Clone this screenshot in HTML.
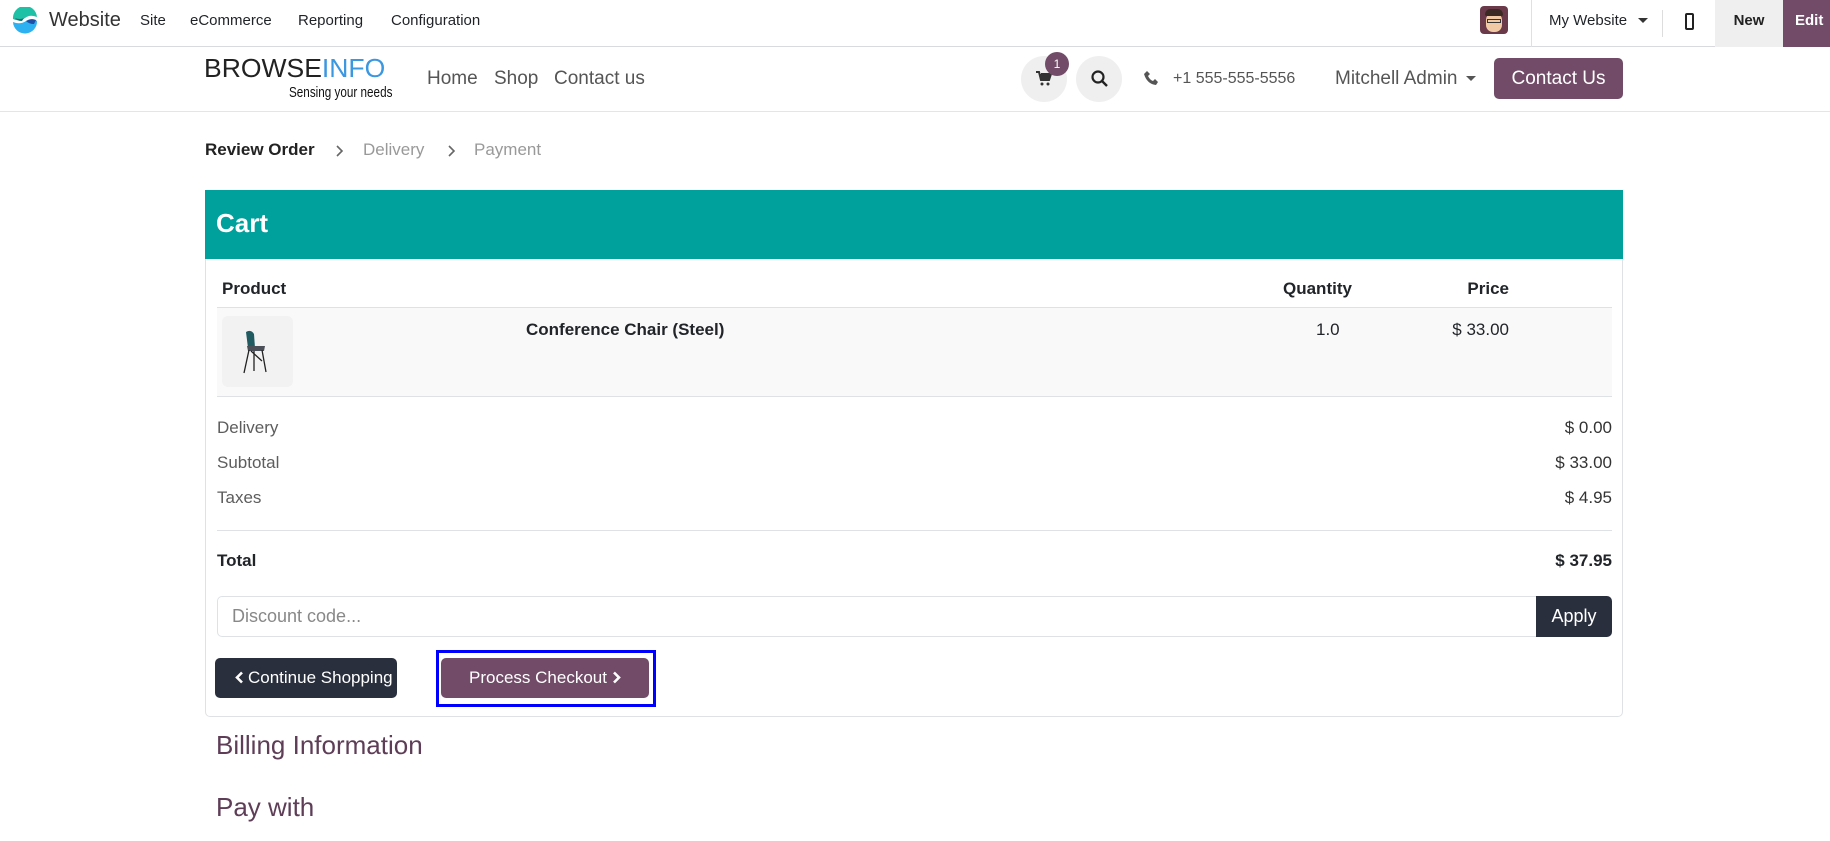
<!DOCTYPE html>
<html><head><meta charset="utf-8"><style>
*{box-sizing:border-box;margin:0;padding:0}
body{width:1830px;height:841px;overflow:hidden;background:#fff;font-family:"Liberation Sans",sans-serif;color:#212529;position:relative}
.a{position:absolute;white-space:nowrap}
.top{position:absolute;left:0;top:0;width:1830px;height:47px;border-bottom:1px solid #d8dadd;background:#fff}
.nav{position:absolute;left:0;top:47px;width:1830px;height:65px;border-bottom:1px solid #e5e5e5;background:#fff}
.m{font-size:15px;color:#1f2328;top:12px}
.n{font-size:19px;color:#555;top:68px}
.r{font-size:17px;color:#5d5d5d}
.v{font-size:17px;color:#333;right:218px}
</style></head><body>
<div class="top"></div>
<svg class="a" style="left:12px;top:7px" width="26" height="28" viewBox="0 0 26 28"><path d="M1 12 A12 12 0 0 1 25 10 Q18 7 13 11 Q7 15 1 12Z" fill="#1fc1a6"/><path d="M1 15 Q8 18 14 14 Q20 10 25 14 A12 12 0 0 1 1 15Z" fill="#2eb1f0"/><path d="M3 11 Q8 13 12 11 L10 14 Q5 14 3 11Z" fill="#1b6d73"/><path d="M14 14 Q19 11 24 13 L22 17 Q17 17 14 14Z" fill="#1e4fa4"/></svg>
<div class="a" style="left:49px;top:9px;font-size:20px;color:#333">Website</div>
<div class="a m" style="left:140px">Site</div>
<div class="a m" style="left:190px">eCommerce</div>
<div class="a m" style="left:298px">Reporting</div>
<div class="a m" style="left:391px">Configuration</div>
<div class="a" style="left:1480px;top:6px;width:28px;height:28px;border-radius:4px;background:#6b3a4a;overflow:hidden"><div style="position:absolute;left:6px;top:7px;width:16px;height:19px;border-radius:7px;background:#f1c9a5"></div><div style="position:absolute;left:5px;top:3px;width:18px;height:7px;border-radius:6px 6px 2px 2px;background:#3b2a24"></div><div style="position:absolute;left:7px;top:13px;width:14px;height:4px;border:1px solid #333"></div></div>
<div class="a" style="left:1531px;top:0;width:1px;height:47px;background:#e0e0e0"></div>
<div class="a m" style="left:1549px">My Website</div>
<div class="a" style="left:1638px;top:18px;border-left:5px solid transparent;border-right:5px solid transparent;border-top:5px solid #333"></div>
<div class="a" style="left:1662px;top:10px;width:1px;height:27px;background:#ddd"></div>
<div class="a" style="left:1685px;top:13px;width:9px;height:17px;border:2px solid #222;border-radius:2px"></div>
<div class="a" style="left:1715px;top:0;width:68px;height:47px;background:#efefef;font-size:15px;font-weight:bold;color:#222;text-align:center;line-height:42px">New</div>
<div class="a" style="left:1783px;top:0;width:47px;height:47px;background:#714b67;font-size:15px;font-weight:bold;color:#fff;line-height:42px;padding-left:12px">Edit</div>

<div class="nav"></div>
<div class="a" style="left:204px;top:53px;font-size:26px;color:#222;transform:scaleX(1.02);transform-origin:left">BROWSE<span style="color:#3a97e0">INFO</span></div>
<div class="a" style="left:289px;top:84px;font-size:15px;color:#111;transform:scaleX(.78);transform-origin:left">Sensing your needs</div>
<div class="a n" style="left:427px">Home</div>
<div class="a n" style="left:494px">Shop</div>
<div class="a n" style="left:554px">Contact us</div>
<div class="a" style="left:1021px;top:56px;width:46px;height:46px;border-radius:50%;background:#efefef"></div>
<svg class="a" style="left:1036px;top:71px" width="16" height="15" viewBox="0 0 16 15"><path d="M0 1h3l2 8h8l2-6H5" fill="none" stroke="#333" stroke-width="2"/><rect x="4" y="3" width="10" height="6" fill="#333"/><circle cx="6" cy="13" r="1.5" fill="#333"/><circle cx="12" cy="13" r="1.5" fill="#333"/></svg>
<div class="a" style="left:1045px;top:52px;width:24px;height:24px;border-radius:50%;background:#714b67;color:#fff;font-size:12px;text-align:center;line-height:24px">1</div>
<div class="a" style="left:1076px;top:56px;width:46px;height:46px;border-radius:50%;background:#efefef"></div>
<svg class="a" style="left:1091px;top:70px" width="17" height="17" viewBox="0 0 17 17"><circle cx="7" cy="7" r="5.5" fill="none" stroke="#222" stroke-width="2.2"/><path d="M11 11l5 5" stroke="#222" stroke-width="2.4"/></svg>
<svg class="a" style="left:1144px;top:71px" width="14" height="14" viewBox="0 0 14 14"><path d="M3 0l3 3-2 2q2 4 5 5l2-2 3 3-2 3Q3 13 0 3z" fill="#555"/></svg>
<div class="a" style="left:1173px;top:70px;font-size:16px;color:#555">+1 555-555-5556</div>
<div class="a n" style="left:1335px;top:68px">Mitchell Admin</div>
<div class="a" style="left:1466px;top:76px;border-left:5px solid transparent;border-right:5px solid transparent;border-top:5px solid #555"></div>
<div class="a" style="left:1494px;top:58px;width:129px;height:41px;border-radius:5px;background:#714b67;color:#fff;font-size:19px;text-align:center;line-height:41px">Contact Us</div>

<div class="a" style="left:205px;top:140px;font-size:17px;font-weight:bold;color:#222">Review Order</div>
<svg class="a" style="left:336px;top:145px" width="8" height="12" viewBox="0 0 8 12"><path d="M1 1l5 5-5 5" fill="none" stroke="#666" stroke-width="1.6"/></svg>
<div class="a" style="left:363px;top:140px;font-size:17px;color:#999">Delivery</div>
<svg class="a" style="left:448px;top:145px" width="8" height="12" viewBox="0 0 8 12"><path d="M1 1l5 5-5 5" fill="none" stroke="#666" stroke-width="1.6"/></svg>
<div class="a" style="left:474px;top:140px;font-size:17px;color:#999">Payment</div>

<div class="a" style="left:205px;top:190px;width:1418px;height:527px;border:1px solid #dee2e6;border-radius:5px"></div>
<div class="a" style="left:205px;top:190px;width:1418px;height:69px;background:#00a09d"></div>
<div class="a" style="left:216px;top:208px;font-size:26px;font-weight:bold;color:#fff">Cart</div>
<div class="a" style="left:222px;top:279px;font-size:17px;font-weight:bold">Product</div>
<div class="a" style="left:1283px;top:279px;font-size:17px;font-weight:bold">Quantity</div>
<div class="a" style="right:321px;top:279px;font-size:17px;font-weight:bold">Price</div>
<div class="a" style="left:217px;top:307px;width:1395px;height:90px;background:#f9f9f9;border-top:1px solid #dee2e6;border-bottom:1px solid #dee2e6"></div>
<div class="a" style="left:222px;top:316px;width:71px;height:71px;border-radius:6px;background:#f2f2f3"></div>
<svg class="a" style="left:238px;top:328px" width="36" height="48" viewBox="0 0 36 48"><path d="M8 4q5-3 8 2l1 14H10z" fill="#1f5b60"/><path d="M9 18h18l-1 5H10z" fill="#4b5058"/><path d="M11 22l-5 23M16 23l0 20M24 22l4 22M13 23l11 10" stroke="#222" stroke-width="1.3" fill="none"/></svg>
<div class="a" style="left:526px;top:320px;font-size:17px;font-weight:bold">Conference Chair (Steel)</div>
<div class="a" style="left:1316px;top:320px;font-size:17px">1.0</div>
<div class="a" style="right:321px;top:320px;font-size:17px">$ 33.00</div>
<div class="a r" style="left:217px;top:418px">Delivery</div><div class="a v" style="top:418px">$ 0.00</div>
<div class="a r" style="left:217px;top:453px">Subtotal</div><div class="a v" style="top:453px">$ 33.00</div>
<div class="a r" style="left:217px;top:488px">Taxes</div><div class="a v" style="top:488px">$ 4.95</div>
<div class="a" style="left:217px;top:530px;width:1395px;height:1px;background:#dee2e6"></div>
<div class="a" style="left:217px;top:551px;font-size:17px;font-weight:bold">Total</div>
<div class="a" style="right:218px;top:551px;font-size:17px;font-weight:bold">$ 37.95</div>
<div class="a" style="left:217px;top:596px;width:1320px;height:41px;border:1px solid #dee2e6;border-radius:5px 0 0 5px;font-size:18px;color:#888;line-height:39px;padding-left:14px">Discount code...</div>
<div class="a" style="left:1536px;top:596px;width:76px;height:41px;background:#2a2f3e;border-radius:0 5px 5px 0;color:#fff;font-size:18px;text-align:center;line-height:41px">Apply</div>
<div class="a" style="left:215px;top:658px;width:182px;height:40px;background:#2a2f3e;border-radius:5px;color:#fff;font-size:17px;line-height:40px;padding-left:20px"><svg style="vertical-align:-1px;margin-right:4px" width="9" height="13" viewBox="0 0 9 13"><path d="M7 1.5L2 6.5l5 5" fill="none" stroke="#fff" stroke-width="2.6"/></svg>Continue Shopping</div>
<div class="a" style="left:436px;top:650px;width:220px;height:57px;border:3px solid #0000ff"></div>
<div class="a" style="left:441px;top:658px;width:208px;height:40px;background:#714b67;border-radius:5px;color:#fff;font-size:17px;text-align:center;line-height:40px">Process Checkout<svg style="vertical-align:-1px;margin-left:5px" width="9" height="13" viewBox="0 0 9 13"><path d="M2 1.5l5 5-5 5" fill="none" stroke="#fff" stroke-width="2.6"/></svg></div>
<div class="a" style="left:216px;top:730px;font-size:26px;color:#5e3d57">Billing Information</div>
<div class="a" style="left:216px;top:792px;font-size:26px;color:#5e3d57">Pay with</div>
</body></html>
